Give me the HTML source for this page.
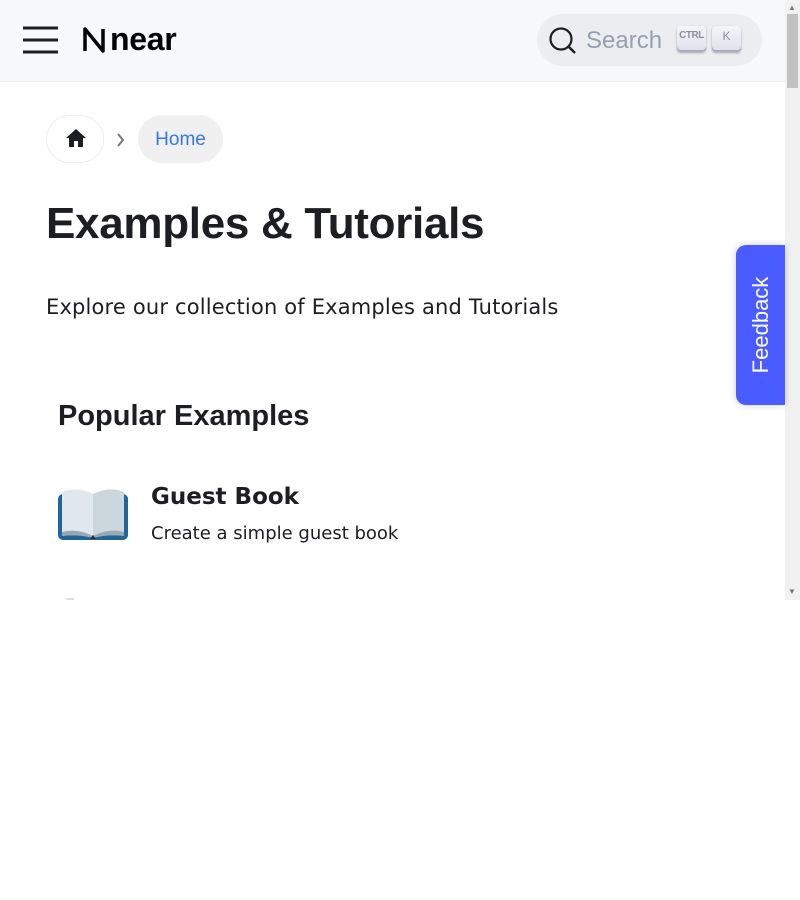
<!DOCTYPE html>
<html><head><meta charset="utf-8"><style>
*{box-sizing:border-box;margin:0;padding:0}
html,body{width:800px;height:900px;background:#fff;overflow:hidden;font-family:"Liberation Sans","DejaVu Sans",sans-serif;color:#1c1e21}
#vp{position:absolute;left:0;top:0;width:800px;height:600px;overflow:hidden;background:#fff}
.nav{position:absolute;left:0;top:0;width:785px;height:82px;background:#f7f8fa;border-bottom:1px solid #ebedf0}
.sb{position:absolute;left:785px;top:0;width:15px;height:600px;background:#f1f1f1}
.thumb{position:absolute;left:787px;top:14px;width:11px;height:74px;background:#c1c1c1}
.search{position:absolute;left:537px;top:14px;width:225px;height:52px;border-radius:26px;background:#ebedf0}
.key{position:absolute;top:12px;height:26px;border-radius:4px;background:linear-gradient(#f4f5f8,#dfe1ea);box-shadow:inset 0 -2px 0 #a9abc4,0 1px 2px rgba(0,0,0,.3);font-size:12px;color:#8b8fa3;text-align:center;line-height:20px}
.crumb-home{position:absolute;left:46px;top:115px;width:58px;height:48px;border:1px solid #ebedf0;border-radius:24px}
.crumb{position:absolute;left:138px;top:115px;width:85px;height:48px;border-radius:24px;background:#f0f0f0;color:#3578e5;font-size:19px;line-height:50px;text-align:center}
h1{position:absolute;left:46px;top:199px;font-size:44px;font-weight:700;letter-spacing:-.3px}
.lead{position:absolute;left:46px;top:295px;font-size:21px;font-family:"DejaVu Sans",sans-serif;letter-spacing:.17px}
h2{position:absolute;left:58px;top:400px;font-size:29px;font-weight:700}
.fb{position:absolute;left:736px;top:245px;width:49px;height:160px;background:#4a5bff;border-radius:10px 0 0 10px;box-shadow:0 0 8px rgba(0,0,0,.2)}
.fb span{position:absolute;left:50%;top:50%;transform:translate(-50%,-50%) rotate(-90deg);color:#fff;font-size:22px;white-space:nowrap}
</style></head><body>
<div id="vp">
<div class="nav">
 <svg style="position:absolute;left:23px;top:26px" width="36" height="28"><g stroke="#1c1e21" stroke-width="3"><line x1="0" y1="2" x2="35" y2="2"/><line x1="0" y1="14" x2="35" y2="14"/><line x1="0" y1="26" x2="35" y2="26"/></g></svg>
 <svg style="position:absolute;left:82px;top:27px" width="24" height="26"><path d="M3 24V2L21 24V2" fill="none" stroke="#000" stroke-width="3.5" stroke-linejoin="round"/></svg>
 <div style="position:absolute;left:110px;top:21px;font-size:32px;font-weight:700;letter-spacing:-.3px;color:#000">near</div>
 <div class="search">
  <svg style="position:absolute;left:11px;top:12px" width="30" height="30"><circle cx="13" cy="13" r="10.5" fill="none" stroke="#1c1e21" stroke-width="2.2"/><line x1="21" y1="21" x2="27" y2="27" stroke="#1c1e21" stroke-width="2.5"/></svg>
  <div style="position:absolute;left:49px;top:13px;font-size:24px;color:#969faf">Search</div>
  <div class="key" style="left:140px;width:29px;font-size:10px;font-weight:700;letter-spacing:-.5px">CTRL</div>
  <div class="key" style="left:175px;width:29px">K</div>
 </div>
</div>
<div class="sb"></div><div class="thumb"></div>
<div style="position:absolute;left:788px;top:3px;font-size:8px;color:#777">▲</div>
<div style="position:absolute;left:788px;top:587px;font-size:8px;color:#777">▼</div>
<div class="crumb-home"><svg style="position:absolute;left:18px;top:12px" width="22" height="20"><path d="M11 1L1 10h3v9h5v-6h4v6h5v-9h3z" fill="#1c1e21"/></svg></div>
<svg style="position:absolute;left:116px;top:133px" width="10" height="14"><path d="M2 1l5 6-5 6" fill="none" stroke="#777" stroke-width="2"/></svg>
<div class="crumb">Home</div>
<h1>Examples &amp; Tutorials</h1>
<div class="lead">Explore our collection of Examples and Tutorials</div>
<h2>Popular Examples</h2>
<svg style="position:absolute;left:57px;top:488px" width="72" height="54" viewBox="0 0 72 54">
 <rect x="1" y="6" width="70" height="46" rx="5" fill="#226699"/>
 <path d="M5 4q15-6 31 2v42q-16-6-31 0z" fill="#e1e8ed"/>
 <path d="M36 6q16-8 31-2v44q-15-6-31 0z" fill="#ccd6dd"/>
 <path d="M5 44q15-4 31 4q16-8 31-4v4q-16-2-31 2q-15-4-31-2z" fill="#99aab5"/>
 <path d="M33 51h6l-3-4z" fill="#292f33"/>
</svg>
<div style="position:absolute;left:151px;top:484px;font-size:23px;font-weight:700;font-family:'DejaVu Sans',sans-serif">Guest Book</div>
<div style="position:absolute;left:151px;top:523px;font-size:18px;font-family:'DejaVu Sans',sans-serif">Create a simple guest book</div>
<div style="position:absolute;left:66px;top:598px;width:8px;height:2px;background:#ddd"></div>
<div class="fb"><span>Feedback</span></div>
</div>
</body></html>
